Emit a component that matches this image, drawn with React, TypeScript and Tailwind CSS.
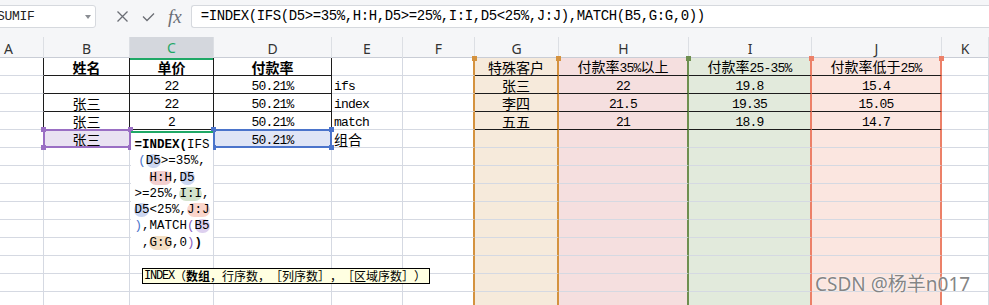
import React from "react";

const colWidths = "grid-cols-[44px_86px_84px_118px_71px_72px_84px_130px_123px_130px_47px]";
const letters = ["A", "B", "C", "D", "E", "F", "G", "H", "I", "J", "K"];

const data: string[][] = [
  ["", "姓名", "单价", "付款率", "", "", "特殊客户", "付款率35%以上", "付款率25-35%", "付款率低于25%", ""],
  ["", "", "22", "50.21%", "ifs", "", "张三", "22", "19.8", "15.4", ""],
  ["", "张三", "22", "50.21%", "index", "", "李四", "21.5", "19.35", "15.05", ""],
  ["", "张三", "2", "50.21%", "match", "", "五五", "21", "18.9", "14.7", ""],
  ["", "张三", "", "50.21%", "组合", "", "", "", "", "", ""],
];
while (data.length < 14) data.push(Array(11).fill(""));

const fills = ["", "", "", "", "", "", "bg-[#f6eadb]", "bg-[#f5dfdf]", "bg-[#e2eadc]", "bg-[#fbe6e0]", ""];
// right edge of each column: gridline, table line or range highlight colour
const rangeRight = ["", "", "", "", "", "border-r-2 border-r-[#d4923f]", "border-r-2 border-r-[#d4923f]", "border-r-2 border-r-[#6e8f50]", "border-r-2 border-r-[#ec8068]", "border-r-2 border-r-[#ec8068]", ""];

// splits text into ascii / cjk runs so each gets its own size
const Mix: React.FC<{ text: string }> = ({ text }) => {
  const parts = text.match(/[\x00-\x7f]+|[^\x00-\x7f]+/g) || [];
  return (
    <span className="leading-none">
      {parts.map((p, i) =>
        /^[\x00-\x7f]/.test(p) ? (
          <span key={i} className="font-['Liberation_Mono',monospace] text-[13px] tracking-[-0.8px]">
            {p}
          </span>
        ) : (
          <span key={i} className="font-['Noto_Sans_CJK_SC',sans-serif] text-[14px]">
            {p}
          </span>
        )
      )}
    </span>
  );
};

const Pill: React.FC<{ color: string; children: React.ReactNode }> = ({ color, children }) => (
  <span className={`rounded-[7px] ${color}`}>{children}</span>
);

const FormulaBar = () => (
  <div className="flex h-[37px] items-start bg-[#f5f6f8] pt-[5px]">
    <div className="ml-[-6px] flex h-[23px] w-[102px] items-center justify-between rounded-[3px] border border-[#d6d9de] bg-white pl-[2px] pr-[4px]">
      <span className="font-['Liberation_Mono',monospace] text-[13px] tracking-[-0.3px] text-[#222]">SUMIF</span>
      <svg width="6" height="4" viewBox="0 0 6 4">
        <path d="M0 0h6L3 4z" fill="#8a8d93" />
      </svg>
    </div>
    <div className="ml-[20px] flex h-[23px] items-center gap-[13px] text-[#6b6e75]">
      <svg width="13" height="13" viewBox="0 0 13 13">
        <path d="M1.5 1.5l10 10M11.5 1.5l-10 10" stroke="#6b6e75" strokeWidth="1.3" />
      </svg>
      <svg width="13" height="10" viewBox="0 0 13 10">
        <path d="M1 4.5l4 4L12 1.5" stroke="#6b6e75" strokeWidth="1.3" fill="none" />
      </svg>
      <span className="font-['Liberation_Serif',serif] text-[19px] italic leading-none text-[#6b6e75]">fx</span>
    </div>
    <div className="ml-[9px] flex h-[23px] flex-1 items-center rounded-l-[3px] border border-r-0 border-[#d6d9de] bg-white pl-[9px]">
      <span className="font-['Liberation_Mono',monospace] text-[14px] tracking-[-0.4px] text-black">
        =INDEX(IFS(D5&gt;=35%,H:H,D5&gt;=25%,I:I,D5&lt;25%,J:J),MATCH(B5,G:G,0))
      </span>
    </div>
  </div>
);

const HeaderRow = () => (
  <div className={`grid h-[21px] ${colWidths} border-b border-[#c9cdd6] bg-[#f5f6f8]`}>
    {letters.map((l, i) => (
      <div
        key={l}
        className={`flex items-center border-r border-[#dcdfe4] font-['Noto_Sans',sans-serif] text-[14px] ${
          i === 0 ? "justify-start pl-[4px]" : "justify-center"
        } ${i === 2 ? "border-b-2 border-b-[#1fa866] bg-[#d4d7dd] text-[#1fa866]" : "text-[#333]"}`}
      >
        {l}
      </div>
    ))}
  </div>
);

const cellClass = (r: number, c: number) => {
  const inLeft = r <= 3 && c >= 1 && c <= 3;
  const inRight = r <= 3 && c >= 6 && c <= 9;
  const bottom = inLeft || inRight ? "border-b-[#1c1c1c]" : "border-b-[#d5d9e2]";
  let right = r <= 3 && c <= 3 ? "border-r border-r-[#1c1c1c]" : "border-r border-r-[#d5d9e2]";
  if (rangeRight[c]) right = rangeRight[c];
  let bg = fills[c];
  if (r === 4 && c === 1) bg = "bg-[#e9e2f2]";
  if (r === 4 && c === 3) bg = "bg-[#dfe5f6]";
  const align = c === 4 ? "justify-start pl-[2px]" : "justify-center";
  const bold = r === 0 && c >= 1 && c <= 3 ? "font-bold" : "";
  return `relative flex items-center whitespace-nowrap border-b text-black ${bottom} ${right} ${bg} ${align} ${bold}`;
};

// reference box with square grips at its corners
const RefBox: React.FC<{ className: string; grip: string }> = ({ className, grip }) => (
  <div className={`pointer-events-none absolute border-2 ${className}`}>
    <div className={`absolute -left-[4px] -top-[4px] h-[5px] w-[5px] ${grip}`} />
    <div className={`absolute -right-[4px] -top-[4px] h-[5px] w-[5px] ${grip}`} />
    <div className={`absolute -bottom-[4px] -left-[4px] h-[5px] w-[5px] ${grip}`} />
    <div className={`absolute -bottom-[4px] -right-[4px] h-[5px] w-[5px] ${grip}`} />
  </div>
);

const Editor = () => (
  <div className="absolute left-[131px] top-[73px] h-[123px] w-[82px] border-t-2 border-[#1fa866] bg-white">
    <div className="flex flex-col items-center pt-[4px] font-['Liberation_Mono',monospace] text-[12.5px] leading-[16.3px] text-black">
      <div>
        <span className="font-bold">=INDEX(</span>IFS
      </div>
      <div>
        <span className="text-[#4b74cb]">(</span>
        <Pill color="bg-[#cbd6f1]">D5</Pill>&gt;=35%,
      </div>
      <div>
        <Pill color="bg-[#f3cfcf]">H:H</Pill>,<Pill color="bg-[#cbd6f1]">D5</Pill>
      </div>
      <div>
        &gt;=25%,<Pill color="bg-[#d3e3cc]">I:I</Pill>,
      </div>
      <div>
        <Pill color="bg-[#cbd6f1]">D5</Pill>&lt;25%,<Pill color="bg-[#fad5cb]">J:J</Pill>
      </div>
      <div>
        <span className="text-[#4b74cb]">)</span>,MATCH<span className="text-[#8a63c0]">(</span>
        <Pill color="bg-[#ddd0ef]">B5</Pill>
      </div>
      <div>
        ,<Pill color="bg-[#f3dfc4]">G:G</Pill>,0<span className="text-[#8a63c0]">)</span>
        <span className="font-bold">)</span>
      </div>
    </div>
  </div>
);

const grips = [
  { left: "left-[472px]", color: "bg-[#d4923f]" },
  { left: "left-[556px]", color: "bg-[#d4923f]" },
  { left: "left-[686px]", color: "bg-[#6e8f50]" },
  { left: "left-[809px]", color: "bg-[#ec8068]" },
  { left: "left-[939px]", color: "bg-[#ec8068]" },
];

const Overlays = () => (
  <>
    {grips.map((g) => (
      <div key={g.left} className={`absolute top-[-2px] h-[5px] w-[5px] ${g.left} ${g.color}`} />
    ))}
    <RefBox className="left-[43px] top-[71px] h-[19px] w-[88px] border-[#9a6fc4]" grip="bg-[#9a6fc4]" />
    <RefBox className="left-[213px] top-[71px] h-[19px] w-[119px] border-[#4b74cb]" grip="bg-[#4b74cb]" />
    <Editor />
    <div className="absolute left-[142px] top-[210px] flex h-[16px] w-[288px] items-center whitespace-nowrap border border-black bg-[#ffffe1] pl-[1px] leading-none text-black [text-spacing-trim:space-all]">
      <span className="font-['Liberation_Mono',monospace] text-[12px] tracking-[-1.2px]">INDEX </span>
      <span className="font-['Noto_Sans_CJK_SC',sans-serif] text-[12px] [text-spacing-trim:space-all]">
        （<b>数组</b>，行序数，［列序数］，［区域序数］）
      </span>
    </div>
  </>
);

export default function App() {
  return (
    <div className="relative h-[305px] w-[989px] overflow-hidden bg-white">
      <FormulaBar />
      <HeaderRow />
      <div className="relative">
        <div className={`grid ${colWidths} auto-rows-[18px]`}>
          {data.map((row, r) =>
            row.map((v, c) => (
              <div key={`${r}-${c}`} className={cellClass(r, c)}>
                {v ? <Mix text={v} /> : null}
              </div>
            ))
          )}
        </div>
        <Overlays />
      </div>
      <div className="absolute left-[815px] top-[275px] font-['Noto_Sans','Noto_Sans_CJK_SC',sans-serif] text-[19px] leading-none text-[#858585] [text-shadow:0_0_2px_#fff,0_0_1px_#fff]">
        CSDN @杨羊n017
      </div>
    </div>
  );
}
